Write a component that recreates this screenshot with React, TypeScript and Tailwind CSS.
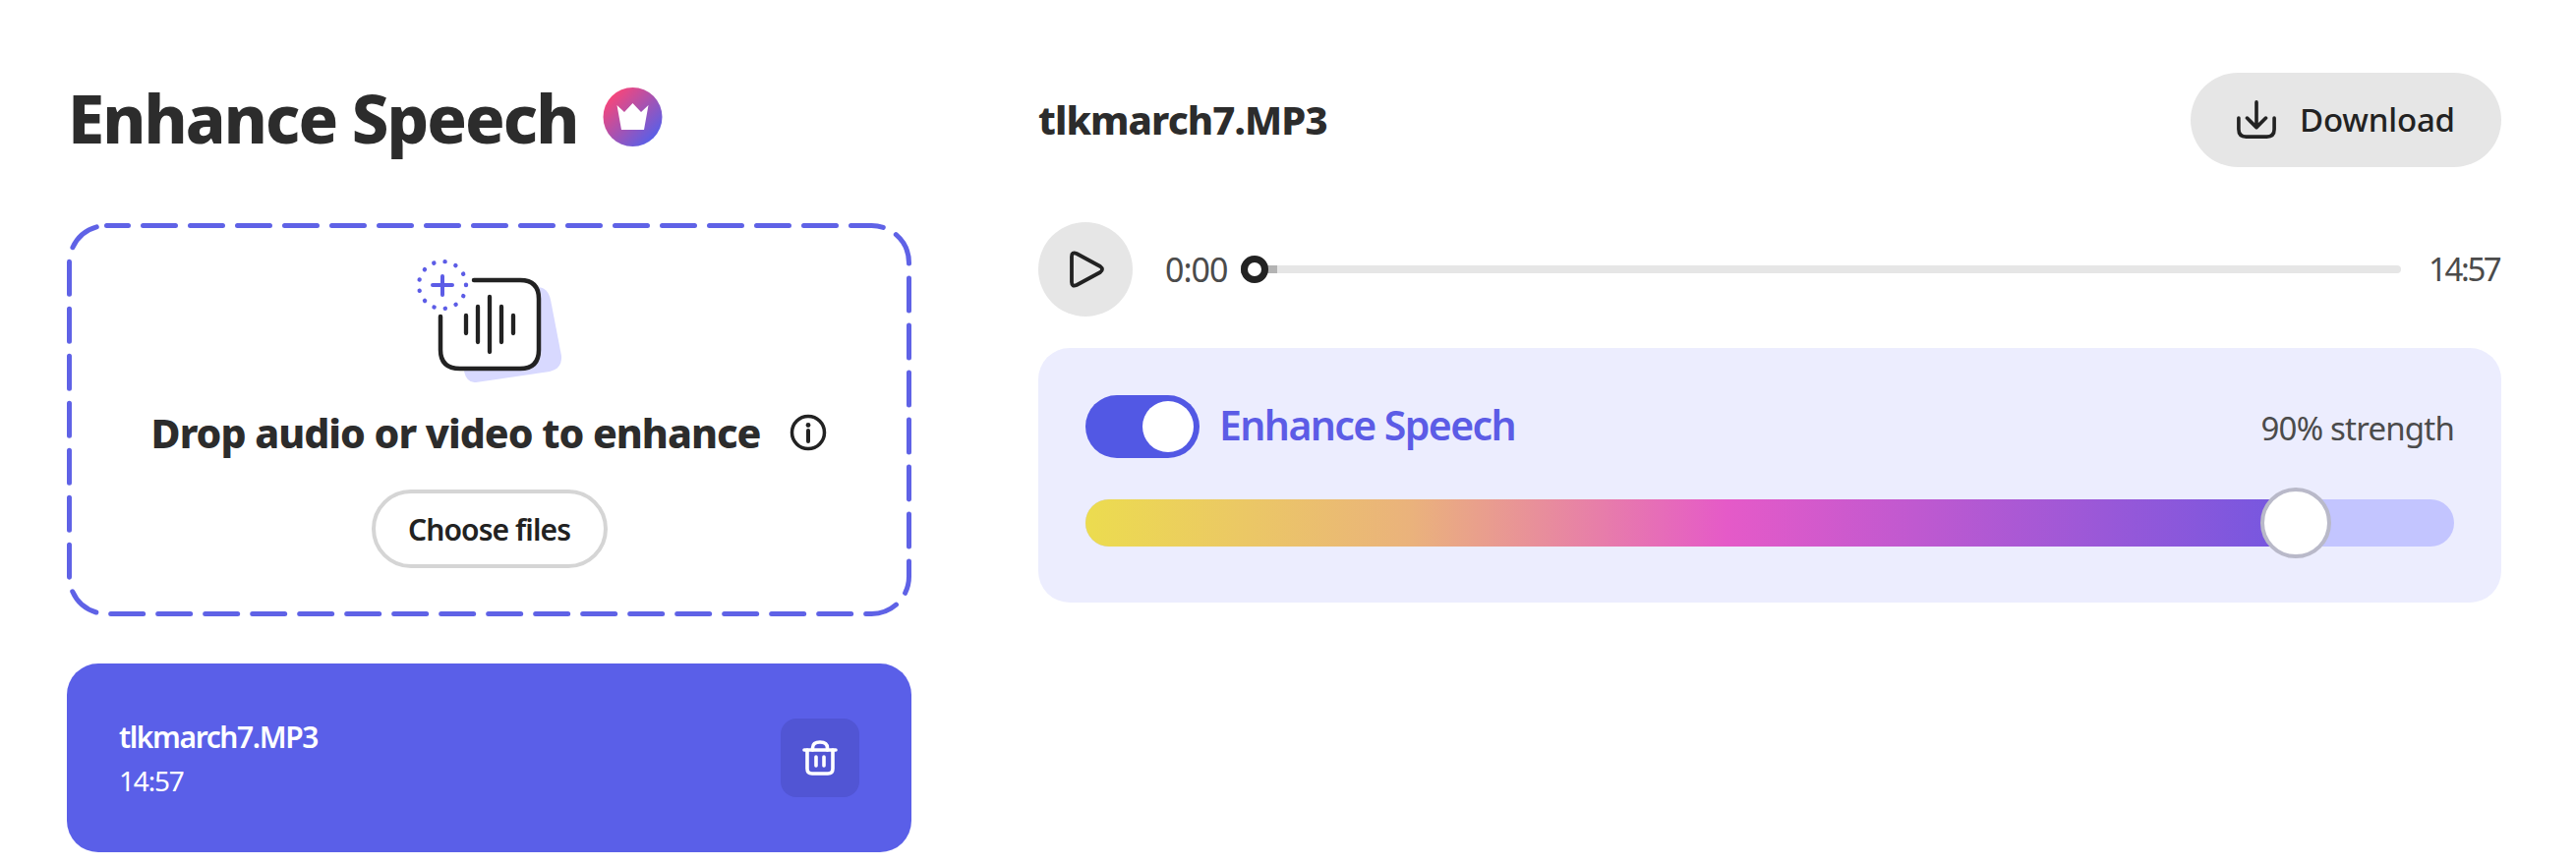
const font = { fontFamily: '"Noto Sans", sans-serif' };

function UploadIcon() {
  return (
    <svg width="200" height="150" viewBox="0 0 200 150" fill="none">
      <path d="M100 60 L145 52 Q158 51 161 65 L172 122 Q173 135 160 138 L85 149 Q76 150 73 138 Z" fill="#d8d9ff" />
      <path d="M83 45 H130 Q149 45 149 64 V116 Q149 135 130 135 H69 Q49 135 49 116 V82" fill="#fff" />
      <path d="M83 45 H130 Q149 45 149 64 V116 Q149 135 130 135 H69 Q49 135 49 116 V82" stroke="#222" strokeWidth="4.5" strokeLinecap="round" />
      <path d="M75 81 V99 M87 72 V108 M99 62 V118 M111 72 V108 M123 81 V99" stroke="#222" strokeWidth="4.3" strokeLinecap="round" />
      <path d="M51 41 V60 M41 50 H61" stroke="#5c5ce6" strokeWidth="4" strokeLinecap="round" />
      <circle cx="51" cy="50" r="24" stroke="#5c5ce6" strokeWidth="4.4" strokeLinecap="round" strokeDasharray="0.1 11.4" />
    </svg>
  );
}

function CrownBadge() {
  return (
    <svg width="61" height="60" viewBox="0 0 61 60" className="ml-[25px] shrink-0">
      <defs>
        <linearGradient id="crown" x1="0.15" y1="0.15" x2="0.85" y2="0.85">
          <stop offset="0" stopColor="#f4467c" />
          <stop offset="1" stopColor="#5b5fe6" />
        </linearGradient>
      </defs>
      <circle cx="30.5" cy="30" r="30" fill="url(#crown)" />
      <path d="M14.5 18 L22 25 L30.5 16 L39 25 L46.5 18 L42 43 H19 Z" fill="#fff" />
    </svg>
  );
}

function InfoIcon() {
  return (
    <svg width="38" height="38" viewBox="0 0 38 38" fill="none">
      <circle cx="19" cy="19" r="16.5" stroke="#222" strokeWidth="3.5" />
      <circle cx="19" cy="11.5" r="2.4" fill="#222" />
      <path d="M19 17 V28" stroke="#222" strokeWidth="4" strokeLinecap="round" />
    </svg>
  );
}

function TrashIcon() {
  return (
    <svg width="36" height="36" viewBox="0 0 36 36" fill="none" stroke="#fff" strokeWidth="3.6" strokeLinecap="round">
      <path d="M2 10 H34" />
      <path d="M10.5 10 V8 Q10.5 2 18 2 Q25.5 2 25.5 8 V10" />
      <path d="M5 10 V29 Q5 34 10 34 H26 Q31 34 31 29 V10" />
      <path d="M14 17 V26 M22 17 V26" />
    </svg>
  );
}

function DownloadIcon() {
  return (
    <svg width="40" height="40" viewBox="0 0 42 42" fill="none" stroke="#222" strokeWidth="3.8" strokeLinecap="round" strokeLinejoin="round">
      <path d="M21 2 V28 M11 19 L21 29 L31 19" />
      <path d="M2 19 V31 Q2 39 10 39 H32 Q40 39 40 31 V19" />
    </svg>
  );
}

function PlayIcon() {
  return (
    <svg width="36" height="38" viewBox="0 0 36 38" fill="none">
      <path d="M3 6 Q3 1 8 3 L32 16 Q36 19 32 22 L8 35 Q3 37 3 32 Z" stroke="#222" strokeWidth="3.8" strokeLinejoin="round" />
    </svg>
  );
}

export default function App() {
  return (
    <div className="flex w-[2620px] h-[880px] bg-white pl-[68px] pr-[76px] overflow-hidden" style={font}>
      <div className="w-[859px] shrink-0 flex flex-col">
        <div className="flex items-center h-[60px] mt-[89px]">
          <h1 className="text-[67px] font-extrabold text-[#2c2c2c] tracking-[-1.9px] leading-none pl-[1px] pt-[3px]">Enhance Speech</h1>
          <CrownBadge />
        </div>
        <div className="relative mt-[78px] h-[400px] flex flex-col items-center">
          <svg className="absolute inset-0" width="859" height="400" fill="none">
            <rect x="2.5" y="2.5" width="854" height="395" rx="38" stroke="#5f62e6" strokeWidth="5" strokeLinecap="round" strokeDasharray="33 15" strokeDashoffset="11" />
          </svg>
          <div className="mt-[13px] ml-[3px]">
            <UploadIcon />
          </div>
          <div className="flex items-center mt-[30px] h-[40px]">
            <span className="text-[41px] font-extrabold text-[#2c2c2c] tracking-[-1px] leading-none">Drop audio or video to enhance</span>
            <span className="ml-[30px] flex"><InfoIcon /></span>
          </div>
          <button className="mt-[38px] w-[240px] h-[80px] rounded-full border-[4px] border-[#d5d5d5] bg-white text-[30px] font-semibold text-[#222] tracking-[-0.9px]">
            Choose files
          </button>
        </div>
        <div className="mt-[48px] h-[192px] rounded-[32px] bg-[#5a5fe8] flex items-center justify-between pl-[53px] pr-[53px]">
          <div className="flex flex-col text-white pt-[2px]">
            <span className="text-[30px] font-semibold leading-[40px] tracking-[-1.4px]">tlkmarch7.MP3</span>
            <span className="text-[28px] leading-[40px] mt-[4px] tracking-[-1.2px]">14:57</span>
          </div>
          <button className="w-[80px] h-[80px] rounded-[16px] bg-[#5155d4] flex items-center justify-center">
            <TrashIcon />
          </button>
        </div>
      </div>

      <div className="ml-[129px] flex-1 flex flex-col">
        <div className="flex items-center justify-between mt-[74px] h-[96px]">
          <span className="text-[40px] font-extrabold text-[#2c2c2c] tracking-[-0.9px]">tlkmarch7.MP3</span>
          <button className="w-[316px] h-[96px] rounded-full bg-[#e6e6e6] flex items-center justify-center gap-[24px] text-[33px] font-medium text-[#222] tracking-[-0.2px]">
            <DownloadIcon />
            Download
          </button>
        </div>
        <div className="flex items-center mt-[56px] h-[96px]">
          <button className="w-[96px] h-[96px] rounded-full bg-[#e6e6e6] flex items-center justify-center shrink-0 pl-[2px]">
            <PlayIcon />
          </button>
          <span className="ml-[33px] text-[34px] text-[#4b4b4b] tracking-[-1px] w-[77px] shrink-0">0:00</span>
          <div className="relative flex-1 h-[8px] rounded-full bg-[#e6e6e6]">
            <div className="h-full w-[37px] bg-[#b3b3b3]" />
            <div className="absolute left-0 top-[-10px] w-[28px] h-[28px] rounded-full bg-white border-[7px] border-[#222]" />
          </div>
          <span className="ml-[28px] w-[74px] text-[33px] text-[#4b4b4b] tracking-[-2.4px] shrink-0 whitespace-nowrap">14:57</span>
        </div>
        <div className="mt-[32px] h-[259px] rounded-[32px] bg-[#ecedfe] px-[48px] pt-[48px]">
          <div className="flex items-center justify-between h-[64px]">
            <div className="flex items-center">
              <div className="w-[116px] h-[64px] rounded-full bg-[#5258e4] flex items-center justify-end pr-[6px]">
                <div className="w-[52px] h-[52px] rounded-full bg-white" />
              </div>
              <span className="ml-[20px] text-[41px] font-semibold text-[#5c5ce6] tracking-[-1.6px] leading-none mb-[4px]">Enhance Speech</span>
            </div>
            <span className="text-[33px] text-[#4b4b4b] tracking-[-0.8px] mt-[4px]">90% strength</span>
          </div>
          <div className="relative mt-[42px] h-[48px] rounded-full bg-[#c3c5ff]">
            <div className="h-full w-[1230px] rounded-l-full bg-[linear-gradient(90deg,#ecdc4f_0%,#eab27c_27%,#e55ac8_53%,#7357e0_100%)]" />
            <div className="absolute left-[1195px] top-[-12px] w-[72px] h-[72px] rounded-full bg-white border-[4px] border-[#b9b9c9]" />
          </div>
        </div>
      </div>
    </div>
  );
}
